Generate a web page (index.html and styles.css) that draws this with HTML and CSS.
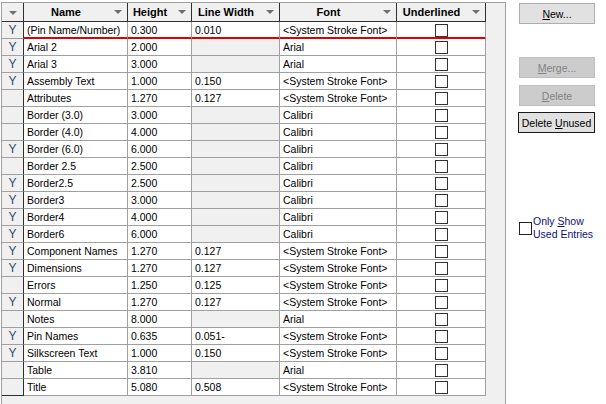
FILE: index.html
```html
<!DOCTYPE html>
<html lang="en">
<head>
  <meta charset="UTF-8">
  <title>Text Styles</title>
  <link rel="stylesheet" href="styles.css">
</head>
<body>
  <div class="dlg">
    <div class="grid-wrap">
      <table class="grid">
        <colgroup>
          <col class="c-used">
          <col class="c-name">
          <col class="c-height">
          <col class="c-lw">
          <col class="c-font">
          <col class="c-ul">
        </colgroup>
        <thead>
          <tr>
            <th class="hdr-used"><span class="arrow"></span></th>
            <th><div class="hdr"><span class="hdr-text">Name</span><span class="arrow"></span></div></th>
            <th><div class="hdr"><span class="hdr-text">Height</span><span class="arrow"></span></div></th>
            <th><div class="hdr"><span class="hdr-text">Line Width</span><span class="arrow"></span></div></th>
            <th><div class="hdr"><span class="hdr-text">Font</span><span class="arrow"></span></div></th>
            <th><div class="hdr"><span class="hdr-text">Underlined</span><span class="arrow"></span></div></th>
          </tr>
        </thead>
        <tbody id="rows"></tbody>
      </table>
    </div>

    <div class="side">
      <button class="btn"><u>N</u>ew...</button>
      <button class="btn btn-off btn-merge" disabled><u>M</u>erge...</button>
      <button class="btn btn-off btn-del" disabled><u>D</u>elete</button>
      <button class="btn btn-default btn-unused">Delete <u>U</u>nused</button>

      <label class="only-used">
        <span class="box"></span>
        <span class="only-text">Only <u>S</u>how<br>Used Entries</span>
      </label>
    </div>
  </div>

  <script>
    // used, name, height, line width, font
    const styles = [
      ['Y', '(Pin Name/Number)', '0.300', '0.010', '<System Stroke Font>'],
      ['Y', 'Arial 2', '2.000', '', 'Arial'],
      ['Y', 'Arial 3', '3.000', '', 'Arial'],
      ['Y', 'Assembly Text', '1.000', '0.150', '<System Stroke Font>'],
      ['', 'Attributes', '1.270', '0.127', '<System Stroke Font>'],
      ['', 'Border (3.0)', '3.000', '', 'Calibri'],
      ['', 'Border (4.0)', '4.000', '', 'Calibri'],
      ['Y', 'Border (6.0)', '6.000', '', 'Calibri'],
      ['', 'Border 2.5', '2.500', '', 'Calibri'],
      ['Y', 'Border2.5', '2.500', '', 'Calibri'],
      ['Y', 'Border3', '3.000', '', 'Calibri'],
      ['Y', 'Border4', '4.000', '', 'Calibri'],
      ['Y', 'Border6', '6.000', '', 'Calibri'],
      ['Y', 'Component Names', '1.270', '0.127', '<System Stroke Font>'],
      ['Y', 'Dimensions', '1.270', '0.127', '<System Stroke Font>'],
      ['', 'Errors', '1.250', '0.125', '<System Stroke Font>'],
      ['Y', 'Normal', '1.270', '0.127', '<System Stroke Font>'],
      ['', 'Notes', '8.000', '', 'Arial'],
      ['Y', 'Pin Names', '0.635', '0.051-', '<System Stroke Font>'],
      ['Y', 'Silkscreen Text', '1.000', '0.150', '<System Stroke Font>'],
      ['', 'Table', '3.810', '', 'Arial'],
      ['', 'Title', '5.080', '0.508', '<System Stroke Font>']
    ];

    const tbody = document.getElementById('rows');
    styles.forEach((s, i) => {
      const tr = document.createElement('tr');
      if (i === 0) tr.className = 'current';

      const cells = [
        { cls: 'used', text: s[0] },
        { cls: 'name', text: s[1] },
        { cls: 'num', text: s[2] },
        { cls: s[3] ? 'num' : 'num empty', text: s[3] },
        { cls: 'font', text: s[4] }
      ];
      cells.forEach(c => {
        const td = document.createElement('td');
        td.className = c.cls;
        td.textContent = c.text;
        tr.appendChild(td);
      });

      const ul = document.createElement('td');
      ul.className = 'ul';
      ul.innerHTML = '<span class="box"></span>';
      tr.appendChild(ul);

      tbody.appendChild(tr);
    });
  </script>
</body>
</html>
```

FILE: styles.css
```css
html, body {
  margin: 0;
  padding: 0;
  background: #fff;
  font-family: 'Liberation Sans', Arial, sans-serif;
  font-size: 10.5px;
  color: #000;
  overflow: hidden;
}
.dlg {
  display: flex;
  align-items: flex-start;
  height: 404px;
}
.grid-wrap {
  margin: 2px 0 0 1px;
  width: 503px;
  height: 420px;
  background: #f0f0f0;
  border: 1px solid #a0a0a0;
  border-bottom: none;
  flex-shrink: 0;
}
.grid {
  table-layout: fixed;
  width: 484px;
  border-collapse: separate;
  border-spacing: 0;
}
.c-used { width: 22px; }
.c-name { width: 104px; }
.c-height { width: 64px; }
.c-lw { width: 88px; }
.c-font { width: 117px; }
.c-ul { width: 89px; }

.grid th {
  height: 18px;
  padding: 0;
  background: #f0f0f0;
  border-right: 1px solid #303030;
  border-bottom: 1px solid #303030;
  font-weight: bold;
  font-size: 11px;
  white-space: nowrap;
}
.hdr {
  display: flex;
  align-items: center;
  padding-right: 5px;
}
.hdr-text {
  flex: 1;
  text-align: center;
  padding-right: 6px;
}
.arrow {
  display: inline-block;
  width: 0;
  height: 0;
  border-left: 4px solid transparent;
  border-right: 4px solid transparent;
  border-top: 4px solid #707070;
  vertical-align: middle;
}
.hdr-used {
  text-align: center;
}

.grid td {
  height: 16px;
  padding: 0 3px;
  background: #fff;
  border-right: 1px solid #a0a0a0;
  border-bottom: 1px solid #a0a0a0;
  white-space: nowrap;
  overflow: hidden;
  line-height: 16px;
}
.grid td.used {
  background: #f0f0f0;
  text-align: center;
  color: #2f4b63;
  font-size: 12px;
  padding: 0;
  border-right-color: #303030;
}
.grid tr:last-child td.used {
  border-bottom-color: #303030;
}
.grid td.empty {
  background: #f0f0f0;
}
.grid td.ul {
  text-align: center;
  padding: 0;
}
.grid tr.current td:not(.used) {
  border-bottom-color: #e00000;
  box-shadow: inset 0 -1px 0 #e00000;
}
.box {
  display: inline-block;
  width: 11px;
  height: 11px;
  border: 1px solid #333;
  background: #fff;
  vertical-align: middle;
  margin-top: -2px;
}

.side {
  display: flex;
  flex-direction: column;
  align-items: flex-start;
  padding: 3px 0 0 13px;
}
.btn {
  width: 76px;
  height: 21px;
  padding: 0;
  font-family: 'Liberation Sans', Arial, sans-serif;
  font-size: 10.5px;
  color: #000;
  background: #e1e1e1;
  border: 1px solid #adadad;
  border-radius: 0;
  white-space: nowrap;
}
.btn-off {
  background: #cccccc;
  border-color: #bfbfbf;
  color: #838383;
}
.btn-merge { margin-top: 33px; }
.btn-del { margin-top: 7px; }
.btn-unused {
  margin-top: 6px;
  margin-left: -1px;
  width: 77px;
}
.btn-default {
  border-color: #1a1a1a;
}
.only-used {
  display: flex;
  align-items: center;
  margin-top: 82px;
  color: #101070;
  line-height: 13px;
}
.only-used .box {
  margin: 0 1px 0 0;
  border-color: #222;
}
.only-text {
  white-space: nowrap;
}
```
